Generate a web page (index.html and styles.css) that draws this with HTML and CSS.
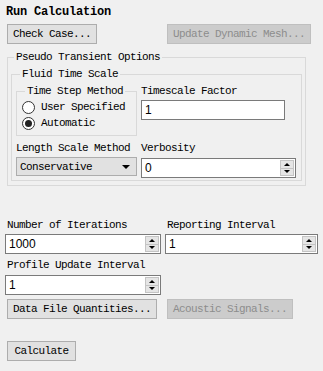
FILE: index.html
```html
<!DOCTYPE html>
<html>
<head>
    <title>Run Calculation</title>
    <link rel="stylesheet" href="styles.css">
</head>
<body>
<div class="panel">
    <div class="title">Run Calculation</div>
    <div class="btn-row top-buttons">
        <button class="btn check">Check Case...</button>
        <button class="btn mesh" disabled>Update Dynamic Mesh...</button>
    </div>

    <fieldset class="group pseudo">
        <legend>Pseudo Transient Options</legend>
        <fieldset class="group fluid">
            <legend>Fluid Time Scale</legend>
            <div class="fluid-grid">
                <fieldset class="group timestep">
                    <legend>Time Step Method</legend>
                    <div class="radio-row"><span class="radio"></span>User Specified</div>
                    <div class="radio-row"><span class="radio checked"></span>Automatic</div>
                </fieldset>
                <div class="field">
                    <div class="label">Timescale Factor</div>
                    <div class="entry factor"><span class="value">1</span></div>
                </div>
                <div class="field">
                    <div class="label">Length Scale Method</div>
                    <div class="select"><span>Conservative</span><span class="caret"></span></div>
                </div>
                <div class="field">
                    <div class="label">Verbosity</div>
                    <div class="entry spin verbosity">
                        <span class="value">0</span>
                        <span class="updown"><span class="up"></span><span class="down"></span></span>
                    </div>
                </div>
            </div>
        </fieldset>
    </fieldset>

    <div class="iter-grid">
        <div class="field">
            <div class="label">Number of Iterations</div>
            <div class="entry spin">
                <span class="value">1000</span>
                <span class="updown"><span class="up"></span><span class="down"></span></span>
            </div>
        </div>
        <div class="field">
            <div class="label">Reporting Interval</div>
            <div class="entry spin">
                <span class="value">1</span>
                <span class="updown"><span class="up"></span><span class="down"></span></span>
            </div>
        </div>
        <div class="field profile">
            <div class="label">Profile Update Interval</div>
            <div class="entry spin">
                <span class="value">1</span>
                <span class="updown"><span class="up"></span><span class="down"></span></span>
            </div>
        </div>
    </div>

    <div class="btn-row data-buttons">
        <button class="btn data">Data File Quantities...</button>
        <button class="btn acoustic" disabled>Acoustic Signals...</button>
    </div>

    <div class="btn-row calc-row">
        <button class="btn calc">Calculate</button>
    </div>
</div>
</body>
</html>
```

FILE: styles.css
```css
body {
    margin: 0;
    background-color: #f0f0f0;
    font-family: "Liberation Mono", "DejaVu Sans Mono", monospace;
    font-size: 11px;
    letter-spacing: -0.6px;
    line-height: 12px;
    color: #000;
}

.panel {
    width: 323px;
    padding-top: 6px;
}

.title {
    margin-left: 6px;
    height: 12px;
    font-size: 12px;
    font-weight: bold;
    letter-spacing: -0.2px;
}

/* Buttons */
.btn-row {
    display: flex;
    padding-left: 7px;
}

.top-buttons {
    margin-top: 6px;
    gap: 70px;
}

.data-buttons {
    margin-top: 4px;
    gap: 10px;
}

.calc-row {
    margin-top: 22px;
}

.btn {
    box-sizing: border-box;
    height: 20px;
    padding: 0;
    margin: 0;
    border: 1px solid #adadad;
    background-color: #e1e1e1;
    font: inherit;
    letter-spacing: inherit;
    color: #000;
    text-align: center;
}

.btn:disabled {
    background-color: #cccccc;
    border-color: #bfbfbf;
    color: #8d8d8d;
}

.check { width: 90px; }
.mesh { width: 144px; }
.data { width: 150px; }
.acoustic { width: 126px; }
.calc { width: 69px; }

/* Group boxes */
.group {
    box-sizing: border-box;
    margin: 0;
    border: 1px solid #d9d9d9;
}

.group legend {
    padding: 0 2px;
    line-height: 12px;
}

.pseudo {
    width: 299px;
    margin: 7px 0 0 7px;
    padding: 5px 3px 4px 3px;
}

.pseudo > legend { margin-left: 3px; }

.fluid {
    width: 291px;
    padding: 5px 5px 2px 4px;
}

.fluid > legend { margin-left: 4px; }

.timestep {
    width: 121px;
    padding: 2px 5px 4px 5px;
}

.timestep > legend { margin-left: 3px; }

.fluid-grid {
    display: grid;
    grid-template-columns: 121px 155px;
    column-gap: 4px;
    row-gap: 6px;
    align-items: start;
}

.radio-row {
    display: flex;
    align-items: center;
    gap: 6px;
    height: 16px;
}

.radio {
    box-sizing: border-box;
    width: 13px;
    height: 13px;
    border: 1px solid #333;
    border-radius: 50%;
    background-color: #fff;
    display: flex;
    align-items: center;
    justify-content: center;
}

.radio.checked::after {
    content: "";
    width: 7px;
    height: 7px;
    border-radius: 50%;
    background-color: #222;
}

/* Fields */
.label {
    height: 12px;
    padding-left: 0;
}

.entry {
    box-sizing: border-box;
    height: 20px;
    margin-top: 3px;
    border: 1px solid #7a7a7a;
    background-color: #fff;
    display: flex;
    align-items: center;
    font-family: "Liberation Sans", Arial, sans-serif;
    font-size: 12px;
    letter-spacing: 0;
}

.entry .value {
    flex: 1;
    padding-left: 3px;
}

.factor { width: 144px; }

.verbosity { margin-top: 4px; }

.updown {
    display: flex;
    flex-direction: column;
    width: 14px;
    height: 16px;
    margin-right: 1px;
}

.updown span {
    box-sizing: border-box;
    flex: 1;
    border: 1px solid #c4c4c4;
    background-color: #e5e5e5;
    display: flex;
    align-items: center;
    justify-content: center;
}

.updown .down { border-top: none; }

.up::after {
    content: "";
    border-left: 3px solid transparent;
    border-right: 3px solid transparent;
    border-bottom: 3px solid #000;
}

.down::after {
    content: "";
    border-left: 3px solid transparent;
    border-right: 3px solid transparent;
    border-top: 3px solid #000;
}

.select {
    box-sizing: border-box;
    height: 19px;
    margin-top: 3px;
    border: 1px solid #adadad;
    background-color: #e1e1e1;
    display: flex;
    align-items: center;
    justify-content: space-between;
    padding: 0 6px 0 3px;
}

.caret {
    border-left: 4px solid transparent;
    border-right: 4px solid transparent;
    border-top: 4px solid #000;
}

/* Iterations */
.iter-grid {
    display: grid;
    grid-template-columns: 156px 153px;
    column-gap: 4px;
    padding-left: 5px;
    margin-top: 33px;
}

.iter-grid .label {
    padding-left: 2px;
}

.profile {
    margin-top: 5px;
}

.profile .entry {
    margin-top: 4px;
}
```
